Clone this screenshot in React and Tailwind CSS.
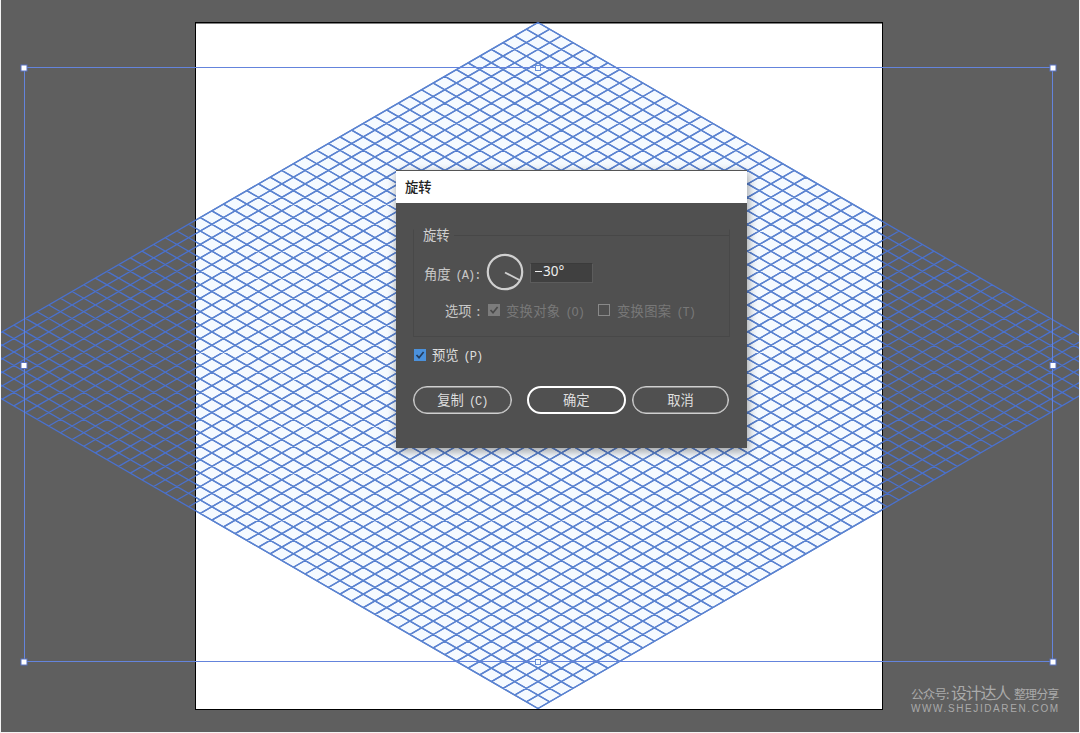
const APEX_X = 538;
const TOP = 22.5;
const HEIGHT = 686;
const HALF_W = 594;
const CELLS = 51;

function gridPath() {
  const dx = HALF_W / CELLS;
  const dy = HEIGHT / 2 / CELLS;
  let d = '';
  for (let i = 0; i <= CELLS; i++) {
    const y = TOP + i * dy;
    const down = APEX_X + i * dx;
    const left = APEX_X - i * dx;
    d += `M${down} ${y}L${down - HALF_W} ${y + HEIGHT / 2}`;
    d += `M${left} ${y}L${left + HALF_W} ${y + HEIGHT / 2}`;
  }
  return d;
}

const GRID = gridPath();
const HANDLES = [
  [24, 68], [1053, 68], [24, 365.5], [1053, 365.5], [24, 662], [1053, 662],
];

function Canvas() {
  return (
    <svg className="absolute inset-0" width="1080" height="733" viewBox="0 0 1080 733">
      <defs>
        <clipPath id="board"><rect x="196" y="23" width="686" height="686" /></clipPath>
        <clipPath id="view"><rect x="1" y="0" width="1078" height="732" /></clipPath>
      </defs>
      <rect width="1080" height="733" fill="#f4f4f4" />
      <rect x="1" width="1078" height="732" fill="#5f5f5f" />
      <rect x="195" y="22" width="688" height="688" fill="#000" />
      <rect x="196" y="23.5" width="686" height="685.5" fill="#fff" />
      <path d="M538 22.5L1132 365.5L538 708.5L-56 365.5Z" fill="#f5faff" clipPath="url(#board)" />
      <g clipPath="url(#view)">
        <path d={GRID} fill="none" stroke="#4a71cd" strokeWidth="1.3" />
        <path d={GRID} fill="none" stroke="#5b84d0" strokeWidth="1.4" clipPath="url(#board)" />
      </g>
      <rect x="24.5" y="67.5" width="1028" height="594" fill="none" stroke="#6484dc" />
      {HANDLES.map(([x, y]) => (
        <rect key={`${x}-${y}`} x={x - 3} y={y - 3} width="6" height="6" fill="#fff" stroke="#5872c4" />
      ))}
      <rect x="535.5" y="65.5" width="5" height="5" fill="#f2f9ff" stroke="#688fd8" />
      <rect x="535.5" y="659.5" width="5" height="5" fill="#f2f9ff" stroke="#688fd8" />
    </svg>
  );
}

function Key({ children }) {
  return (
    <span className="ml-[5px] inline-block font-['Liberation_Mono',monospace] text-[12px] tracking-[-1px]">
      {children}
    </span>
  );
}

function Check({ className, mark }) {
  return (
    <span className={`flex h-3 w-3 shrink-0 items-center justify-center ${className}`}>
      {mark && (
        <svg width="10" height="10" viewBox="0 0 10 10" fill="none" stroke={mark} strokeWidth="1.7">
          <path d="M1.5 5L4 7.7L8.6 2" />
        </svg>
      )}
    </span>
  );
}

function Dialog() {
  return (
    <div
      role="dialog"
      className="absolute left-[396px] top-[170px] flex h-[278px] w-[350.5px] flex-col border-t border-[#555] bg-[#505050] text-[13.3px] leading-none text-[#dedede] shadow-[1px_3px_9px_rgba(0,0,0,0.4)]"
    >
      <div className="flex h-8 shrink-0 items-center bg-white pl-[9px] font-medium text-[#222]">旋转</div>
      <div className="flex flex-1 flex-col px-[17px] pt-[26px]">
        <fieldset className="relative flex h-[108px] flex-col border border-[#484848] border-t-transparent">
          <div className="flex h-[13px] items-center">
            <span className="ml-[9px] mt-[-3px] shrink-0 text-[#cfcfcf]">旋转</span>
            <span className="ml-1 mt-[-2px] h-px flex-1 bg-[#474747]" />
          </div>
          <div className="mt-[11px] flex h-[38px] items-center pl-[10px] text-[#c8c8c8]">
            <span className="mt-[2px] w-[64px] whitespace-nowrap">角度<Key>(A):</Key></span>
            <svg className="ml-[-2px] mt-[-2px]" width="38" height="38" viewBox="0 0 38 38" fill="none" stroke="#d0d0d0">
              <circle cx="19" cy="19" r="17.2" strokeWidth="2.2" />
              <path d="M19 19.5L33.5 27" strokeWidth="1.9" />
            </svg>
            <div className="ml-[6px] flex h-5 w-[63px] items-center border border-[#5c5c5c] border-t-[#3b3b3b] bg-[#404040] pb-[3px] pl-[4px] font-['Noto_Sans'] text-[13.5px] text-[#eeeeee]">
              <span className="mr-px inline-block h-[1.5px] w-[7px] bg-[#eeeeee]" />30°
            </div>
          </div>
          <div className="mt-[11px] flex h-4 items-center whitespace-nowrap pl-[31px]">
            <span className="w-[43px] text-[#c8c8c8]">选项<span className="ml-[5px]">:</span></span>
            <Check className="mt-[-2px] bg-[#7c7c7c]" mark="#4a4a4a" />
            <span className="ml-[6px] w-[92px] tracking-[0.3px] text-[#787878]">变换对象<Key>(O)</Key></span>
            <Check className="mt-[-2px] border border-[#898989]" />
            <span className="ml-[7px] tracking-[0.3px] text-[#787878]">变换图案<Key>(T)</Key></span>
          </div>
        </fieldset>
        <div className="mt-[10px] flex h-4 items-center">
          <Check className="ml-px bg-[#4b91dc]" mark="#243c5c" />
          <span className="ml-[6px]">预览<Key>(P)</Key></span>
        </div>
        <div className="mt-[23px] flex h-[28px]">
          <button className="w-[99px] rounded-full border-[1.5px] border-[#d0d0d0] shadow-[inset_0_0_0_0.5px_#d0d0d0]">复制<Key>(C)</Key></button>
          <button className="ml-[15px] w-[99px] rounded-full border-2 border-white">确定</button>
          <button className="ml-[6px] w-[98px] rounded-full border-[1.5px] border-[#d0d0d0] shadow-[inset_0_0_0_0.5px_#d0d0d0]">取消</button>
        </div>
      </div>
    </div>
  );
}

export default function App() {
  return (
    <div className="relative h-[733px] w-[1080px] overflow-hidden font-['Noto_Sans_CJK_SC',sans-serif]">
      <Canvas />
      <Dialog />
      <div className="absolute left-[911px] top-[679px] w-[150px] whitespace-nowrap leading-none text-[#aaaaaa]">
        <div className="flex h-[21px] items-end">
          <span className="w-[40px] text-[12.5px] tracking-[-0.8px]">公众号:</span>
          <span className="w-[63px] text-[16px] tracking-[-1.3px]">设计达人</span>
          <span className="text-[12px] tracking-[-0.9px]">整理分享</span>
        </div>
        <div className="mt-[3px] font-['Liberation_Sans',sans-serif] text-[10px] leading-[12px] tracking-[1.6px]">WWW.SHEJIDAREN.COM</div>
      </div>
    </div>
  );
}
